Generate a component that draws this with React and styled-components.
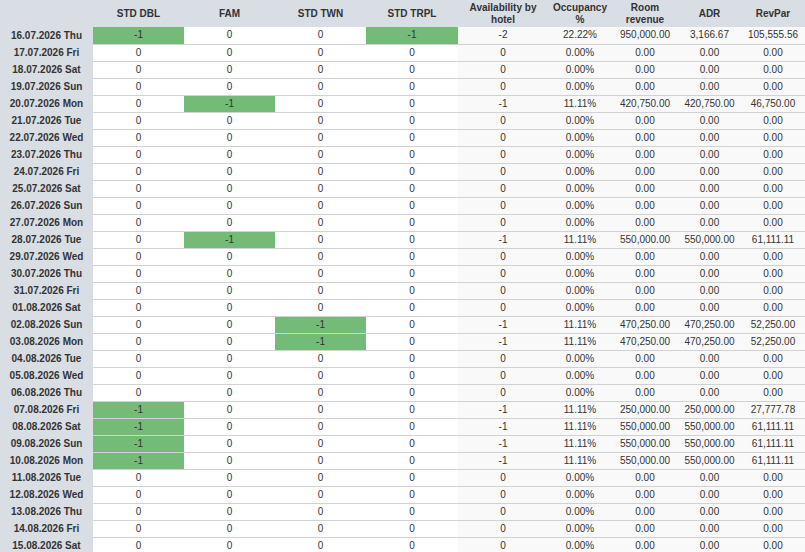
import React from 'react';
import styled, { createGlobalStyle } from 'styled-components';

const GlobalStyle = createGlobalStyle`
  html, body {
    margin: 0;
    padding: 0;
    background: #ffffff;
    overflow: hidden;
  }
  body {
    font-family: 'Liberation Sans', Arial, sans-serif;
    font-size: 10px;
    color: #333333;
  }
`;

const ROOMS = ['STD DBL', 'FAM', 'STD TWN', 'STD TRPL'];
const DAYS = ['Sun', 'Mon', 'Tue', 'Wed', 'Thu', 'Fri', 'Sat'];

// sold rooms per date: index of room column -> value
const SALES = {
  '16.07': { rooms: [0, 3], avail: -2, occ: '22.22%', rev: '950,000.00', adr: '3,166.67', revpar: '105,555.56' },
  '20.07': { rooms: [1], avail: -1, occ: '11.11%', rev: '420,750.00', adr: '420,750.00', revpar: '46,750.00' },
  '28.07': { rooms: [1], avail: -1, occ: '11.11%', rev: '550,000.00', adr: '550,000.00', revpar: '61,111.11' },
  '02.08': { rooms: [2], avail: -1, occ: '11.11%', rev: '470,250.00', adr: '470,250.00', revpar: '52,250.00' },
  '03.08': { rooms: [2], avail: -1, occ: '11.11%', rev: '470,250.00', adr: '470,250.00', revpar: '52,250.00' },
  '07.08': { rooms: [0], avail: -1, occ: '11.11%', rev: '250,000.00', adr: '250,000.00', revpar: '27,777.78' },
  '08.08': { rooms: [0], avail: -1, occ: '11.11%', rev: '550,000.00', adr: '550,000.00', revpar: '61,111.11' },
  '09.08': { rooms: [0], avail: -1, occ: '11.11%', rev: '550,000.00', adr: '550,000.00', revpar: '61,111.11' },
  '10.08': { rooms: [0], avail: -1, occ: '11.11%', rev: '550,000.00', adr: '550,000.00', revpar: '61,111.11' },
};

const pad = (n) => String(n).padStart(2, '0');

function buildRows() {
  const rows = [];
  for (let i = 0; i < 31; i++) {
    const d = new Date(2026, 6, 16 + i);
    const key = `${pad(d.getDate())}.${pad(d.getMonth() + 1)}`;
    const sale = SALES[key];
    rows.push({
      label: `${key}.2026 ${DAYS[d.getDay()]}`,
      rooms: ROOMS.map((_, idx) => (sale && sale.rooms.includes(idx) ? -1 : 0)),
      avail: sale ? sale.avail : 0,
      occ: sale ? sale.occ : '0.00%',
      rev: sale ? sale.rev : '0.00',
      adr: sale ? sale.adr : '0.00',
      revpar: sale ? sale.revpar : '0.00',
    });
  }
  return rows;
}

const Table = styled.table`
  width: 805px;
  table-layout: fixed;
  border-collapse: collapse;
  border-spacing: 0;
`;

const HeadRow = styled.tr`
  height: 27px;
  background: #d9dde4;
`;

const HeadCell = styled.th`
  padding: 0 2px;
  font-weight: bold;
  font-size: 10px;
  line-height: 12px;
  text-align: center;
  vertical-align: middle;
  color: #333333;
`;

const Row = styled.tr`
  height: 17px;
`;

const DateCell = styled.td`
  background: #d9dde4;
  font-weight: bold;
  text-align: center;
  padding: 0;
  line-height: 16px;
  white-space: nowrap;
`;

const RoomCell = styled.td`
  background: ${(p) => (p.$sold ? '#73bb77' : '#ffffff')};
  border-bottom: 1px solid #d2d2d2;
  text-align: center;
  padding: 0;
  line-height: 16px;
`;

const StatCell = styled.td`
  background: #f9f9f9;
  border-bottom: 1px solid #d2d2d2;
  text-align: center;
  padding: 0;
  line-height: 16px;
  white-space: nowrap;
`;

const COLS = [93, 91, 91, 91, 92, 90, 64, 66, 63, 64];

export default function App() {
  const rows = buildRows();
  return (
    <>
      <GlobalStyle />
      <Table>
        <colgroup>
          {COLS.map((w, i) => (
            <col key={i} style={{ width: w }} />
          ))}
        </colgroup>
        <thead>
          <HeadRow>
            <HeadCell />
            {ROOMS.map((r) => (
              <HeadCell key={r}>{r}</HeadCell>
            ))}
            <HeadCell>Availability by<br />hotel</HeadCell>
            <HeadCell>Occupancy<br />%</HeadCell>
            <HeadCell>Room<br />revenue</HeadCell>
            <HeadCell>ADR</HeadCell>
            <HeadCell>RevPar</HeadCell>
          </HeadRow>
        </thead>
        <tbody>
          {rows.map((row) => (
            <Row key={row.label}>
              <DateCell>{row.label}</DateCell>
              {row.rooms.map((v, i) => (
                <RoomCell key={i} $sold={v !== 0}>{v}</RoomCell>
              ))}
              <StatCell>{row.avail}</StatCell>
              <StatCell>{row.occ}</StatCell>
              <StatCell>{row.rev}</StatCell>
              <StatCell>{row.adr}</StatCell>
              <StatCell>{row.revpar}</StatCell>
            </Row>
          ))}
        </tbody>
      </Table>
    </>
  );
}
